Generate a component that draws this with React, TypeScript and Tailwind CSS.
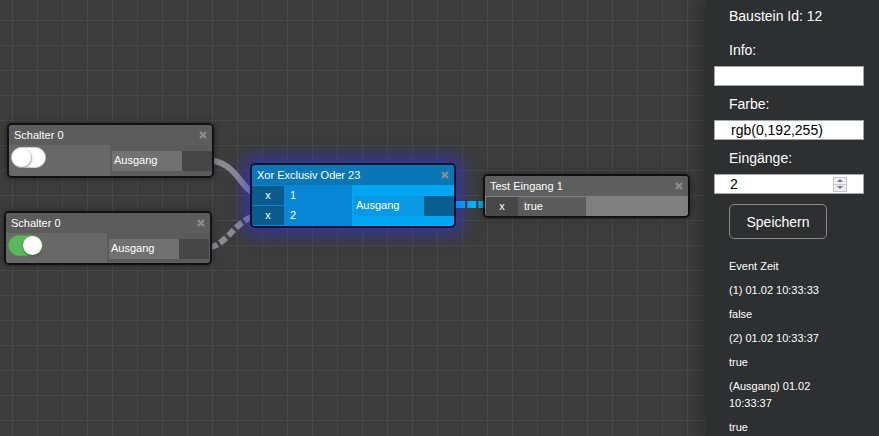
import React from "react";

function Close() {
  return (
    <svg width="8" height="8" viewBox="0 0 8 8" className="shrink-0">
      <path d="M1 1L7 7M7 1L1 7" stroke="#8e8e8e" strokeWidth="2.2" />
    </svg>
  );
}

function Toggle({ on }: { on: boolean }) {
  return on ? (
    <div className="flex w-[35px] h-[21px] items-center justify-end rounded-full bg-[#5cb85c] border border-[#4ea84e]">
      <div className="w-[19px] h-[19px] rounded-full bg-white shadow-[0_1px_2px_rgba(0,0,0,0.45)]" />
    </div>
  ) : (
    <div className="flex w-[35px] h-[21px] items-center justify-start rounded-full bg-white border border-[#cfcfcf]">
      <div className="w-[19px] h-[19px] rounded-full bg-white shadow-[1px_1px_2px_rgba(0,0,0,0.35)]" />
    </div>
  );
}

function Header({ title, cls }: { title: string; cls: string }) {
  return (
    <div className={`h-[20px] flex items-center justify-between pl-[5px] pr-[5px] ${cls}`}>
      <span>{title}</span>
      <Close />
    </div>
  );
}

function SchalterBody({ on }: { on: boolean }) {
  return (
    <div className="flex h-[31px]">
      <div className="w-[101px] bg-[#686868] pl-[2px] pt-[2px]">
        <Toggle on={on} />
      </div>
      <div className="flex-1 flex items-center pl-[2px]">
        <div className="flex w-[100px] h-[20px] bg-[#717171]">
          <div className="flex-1 flex items-center pl-[2px]">Ausgang</div>
          <div className="w-[30px] bg-[#464646]" />
        </div>
      </div>
    </div>
  );
}

export default function App() {
  return (
    <div className="flex w-[879px] h-[436px] overflow-hidden font-['Liberation_Sans',Arial,sans-serif]">
      {/* Canvas */}
      <div className="relative w-[705px] h-[436px] overflow-hidden bg-[#3c3c3c] bg-[linear-gradient(to_right,#484848_1px,transparent_1px),linear-gradient(to_bottom,#484848_1px,transparent_1px)] bg-size-[25px_25px] bg-position-[12px_20px]">
        <svg className="absolute inset-0" width="705" height="436">
          <path d="M205 160 C240 160, 240 195, 262 195" stroke="#8a8a90" strokeWidth="6" fill="none" />
          <path
            d="M205 248 C228 248, 236 215, 262 215"
            stroke="#8a8a90"
            strokeWidth="6"
            fill="none"
            strokeDasharray="8 3"
            strokeDashoffset="-5"
          />
          <path d="M456 204.5 L486 204.5" stroke="#00b4f5" strokeWidth="7" fill="none" strokeDasharray="9 2.2" />
        </svg>

        {/* Schalter 0 (top) */}
        <div className="absolute left-[7px] top-[123px] w-[207px] h-[55px] rounded-[5px] border-2 border-[#111] bg-[#5c5c5c] overflow-hidden text-white text-[11px] shadow-[0_0_6px_rgba(0,0,0,0.45)]">
          <Header title="Schalter 0" cls="bg-[#5c5c5c]" />
          <SchalterBody on={false} />
        </div>

        {/* Schalter 0 (bottom) */}
        <div className="absolute left-[4px] top-[211px] w-[208px] h-[54px] rounded-[5px] border-2 border-[#111] bg-[#5c5c5c] overflow-hidden text-white text-[11px] shadow-[0_0_6px_rgba(0,0,0,0.45)]">
          <Header title="Schalter 0" cls="bg-[#5c5c5c]" />
          <SchalterBody on={true} />
        </div>

        {/* Xor */}
        <div className="absolute left-[250px] top-[163px] w-[206px] h-[65px] rounded-[5px] border-2 border-[#0b1430] bg-[#00a6f4] overflow-hidden text-white text-[11px] shadow-[0_0_16px_6px_rgba(45,45,255,0.5)]">
          <Header title="Xor Exclusiv Oder 23" cls="bg-[#0a76b6] pl-[4px]" />
          <div className="flex h-[41px]">
            <div className="w-[100px] bg-[#0a86d6] flex flex-col gap-[1px] pt-[1px]">
              <div className="flex h-[19px]">
                <div className="w-[32px] bg-[#0b5a8c] flex items-center justify-center">x</div>
                <div className="flex-1 flex items-center pl-[6px]">1</div>
              </div>
              <div className="flex h-[19px]">
                <div className="w-[32px] bg-[#0b5a8c] flex items-center justify-center">x</div>
                <div className="flex-1 flex items-center pl-[6px]">2</div>
              </div>
            </div>
            <div className="flex-1 flex items-center pl-[2px]">
              <div className="flex w-[100px] h-[20px] bg-[#0a98e4]">
                <div className="flex-1 flex items-center pl-[2px]">Ausgang</div>
                <div className="w-[30px] bg-[#0b5d90]" />
              </div>
            </div>
          </div>
        </div>

        {/* Test Eingang */}
        <div className="absolute left-[483px] top-[174px] w-[207px] h-[44px] rounded-[5px] border-2 border-[#111] bg-[#808080] overflow-hidden text-white text-[11px] shadow-[0_0_6px_rgba(0,0,0,0.45)]">
          <Header title="Test Eingang 1" cls="bg-[#5e5e5e]" />
          <div className="flex h-[20px] pt-[1px] pl-[1px]">
            <div className="w-[32px] bg-[#474747] flex items-center justify-center">x</div>
            <div className="w-[68px] bg-[#5b5b5b] flex items-center pl-[6px]">true</div>
          </div>
        </div>
      </div>

      {/* Side panel */}
      <div className="relative z-10 w-[174px] h-[436px] bg-[#2e2f31] text-white text-[14px] leading-[16px] pt-[8px] shadow-[-6px_0_14px_rgba(0,0,0,0.22)]">
        <div className="pl-[24px]">Baustein Id: 12</div>
        <div className="pl-[24px] mt-[18px]">Info:</div>
        <div className="ml-[9px] mt-[8px] w-[150px] h-[20px] bg-white border border-[#a5a5a5]" />
        <div className="pl-[24px] mt-[10px]">Farbe:</div>
        <div className="ml-[9px] mt-[8px] w-[150px] h-[20px] bg-white border border-[#a5a5a5] pl-[16px] text-black flex items-center">
          rgb(0,192,255)
        </div>
        <div className="pl-[24px] mt-[10px]">Eingänge:</div>
        <div className="ml-[9px] mt-[8px] w-[150px] h-[20px] bg-white border border-[#a5a5a5] pl-[15px] pr-[16px] text-black flex items-center justify-between">
          <span>2</span>
          <div className="flex flex-col w-[14px] h-[15px] border border-[#c8c8c8] bg-[#efefef]">
            <div className="flex-1 flex items-center justify-center border-b border-[#c8c8c8]">
              <div className="w-0 h-0 border-l-[3px] border-r-[3px] border-b-[3px] border-l-transparent border-r-transparent border-b-[#6a7a9a]" />
            </div>
            <div className="flex-1 flex items-center justify-center">
              <div className="w-0 h-0 border-l-[3px] border-r-[3px] border-t-[3px] border-l-transparent border-r-transparent border-t-[#6a7a9a]" />
            </div>
          </div>
        </div>
        <button className="block ml-[24px] mt-[10px] w-[98px] h-[35px] border border-[#8a8a8a] rounded-[5px] text-white text-[14px]">
          Speichern
        </button>
        <div className="pl-[24px] mt-[19px] w-[144px] flex flex-col gap-[7.5px] text-[11px] leading-[16.5px]">
          <p>Event Zeit</p>
          <p>(1) 01.02 10:33:33</p>
          <p>false</p>
          <p>(2) 01.02 10:33:37</p>
          <p>true</p>
          <p>(Ausgang) 01.02 10:33:37</p>
          <p>true</p>
        </div>
      </div>
    </div>
  );
}
